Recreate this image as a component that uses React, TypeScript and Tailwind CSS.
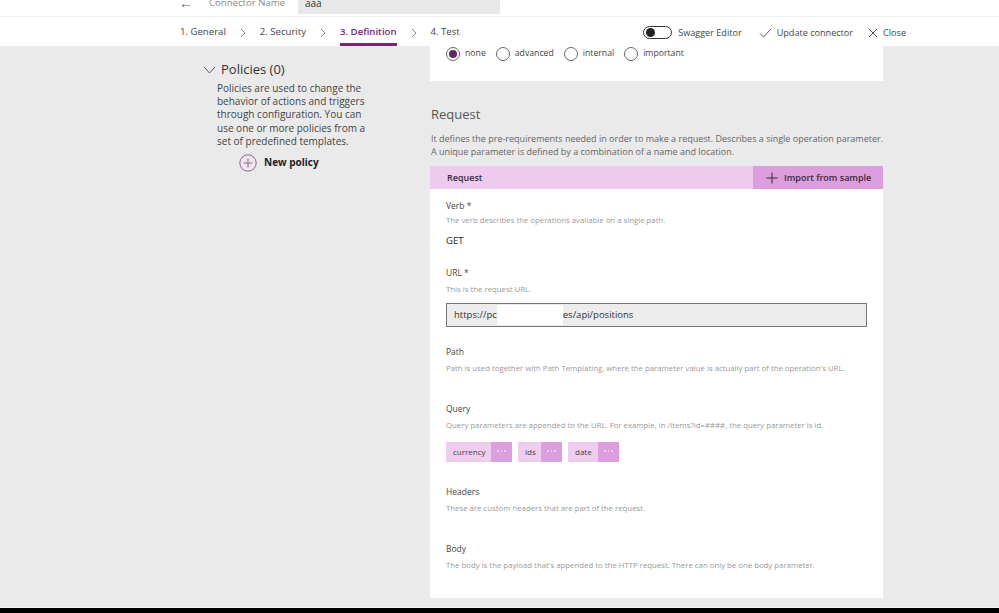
import React from 'react';

const font = { fontFamily: '"Open Sans", "Noto Sans", sans-serif' };

function Chevron() {
  return (
    <svg width="8" height="10" viewBox="0 0 8 10" className="text-[#888]">
      <path d="M2 1l4 4-4 4" fill="none" stroke="currentColor" strokeWidth="1" />
    </svg>
  );
}

function Radio({ label, checked }: { label: string; checked?: boolean }) {
  return (
    <div className="flex items-center gap-[5px]">
      <span className="w-[14px] h-[14px] rounded-full border border-[#666] flex items-center justify-center bg-white">
        {checked && <span className="w-[8px] h-[8px] rounded-full bg-[#5c2a5c]" />}
      </span>
      <span className="text-[8.7px] text-[#444]">{label}</span>
    </div>
  );
}

function Field({ label, desc, gap = 'mt-[4px]', children }: { label: string; desc: string; gap?: string; children?: React.ReactNode }) {
  return (
    <div>
      <div className="text-[8.5px] text-[#444] leading-[12px]">{label}</div>
      <div className={`${gap} text-[7.8px] text-[#9a9a9a] leading-[12px]`}>{desc}</div>
      {children}
    </div>
  );
}

function Chip({ name, w }: { name: string; w: string }) {
  return (
    <div className="flex h-[20px]">
      <div className={`${w} bg-[#efcdef] text-[8px] text-[#444] flex items-center pl-[7px]`}>{name}</div>
      <div className="w-[21px] bg-[#dc9edc] flex items-center justify-center gap-[2px] pb-[2px]">
        <span className="w-[1.5px] h-[1.5px] rounded-full bg-[#f3dcf3]" />
        <span className="w-[1.5px] h-[1.5px] rounded-full bg-[#f3dcf3]" />
        <span className="w-[1.5px] h-[1.5px] rounded-full bg-[#f3dcf3]" />
      </div>
    </div>
  );
}

export default function App() {
  return (
    <div style={font} className="w-[999px] h-[613px] overflow-hidden bg-[#eaeaea] flex flex-col">
      {/* top strip, page scrolled so it is cut */}
      <div className="h-[17px] bg-white border-b border-[#efefef] overflow-hidden shrink-0">
        <div className="flex items-center h-[24px] -mt-[9px] pl-[179px]">
          <span className="text-[14px] text-[#666] leading-none">←</span>
          <span className="ml-[16px] text-[9.6px] text-[#888]">Connector Name</span>
          <div className="ml-[13px] w-[202px] h-[22px] bg-[#e8e8e8] flex items-center pl-[7px] text-[10px] text-[#333]">
            aaa
          </div>
        </div>
      </div>

      {/* steps */}
      <div className="h-[29px] bg-white flex items-stretch shrink-0">
        <div className="flex items-stretch pl-[180px] text-[9.6px] text-[#444]">
          <div className="flex items-center pt-[2px]">1. General</div>
          <div className="flex items-center px-[13px] pt-[2px]"><Chevron /></div>
          <div className="flex items-center pt-[2px]">2. Security</div>
          <div className="flex items-center px-[13px] pt-[2px]"><Chevron /></div>
          <div className="flex items-center border-b-[3px] border-[#742774] pt-[5px] text-[#742774] font-semibold">3. Definition</div>
          <div className="flex items-center px-[13px] pt-[2px]"><Chevron /></div>
          <div className="flex items-center pt-[2px]">4. Test</div>
        </div>
        <div className="flex items-center ml-auto pr-[93px] pt-[2px] text-[9.1px] text-[#444]">
          <div className="w-[29px] h-[13px] rounded-full border border-[#333] flex items-center pl-[2px]">
            <span className="w-[9px] h-[9px] rounded-full bg-[#222]" />
          </div>
          <span className="ml-[6px]">Swagger Editor</span>
          <svg width="13" height="10" viewBox="0 0 13 10" className="ml-[17px]">
            <path d="M1 5.5l3.5 3.5L12 1" fill="none" stroke="#555" strokeWidth="1" />
          </svg>
          <span className="ml-[5px]">Update connector</span>
          <svg width="10" height="10" viewBox="0 0 10 10" className="ml-[15px]">
            <path d="M1 1l8 8M9 1l-8 8" fill="none" stroke="#555" strokeWidth="1" />
          </svg>
          <span className="ml-[5px]">Close</span>
        </div>
      </div>

      {/* main */}
      <div className="flex flex-1 min-h-0">
        <div className="w-[430px] pl-[203px] pt-[14px] shrink-0">
          <div className="flex items-center gap-[5px]">
            <svg width="13" height="8" viewBox="0 0 13 8">
              <path d="M1 1l5.5 6L12 1" fill="none" stroke="#555" strokeWidth="1" />
            </svg>
            <span className="text-[13px] text-[#333]">Policies (0)</span>
          </div>
          <p className="ml-[14px] mt-[2px] w-[150px] text-[10px] leading-[13.4px] text-[#444]">
            Policies are used to change the behavior of actions and triggers through configuration. You can use one or more policies from a set of predefined templates.
          </p>
          <div className="flex items-center ml-[36px] mt-[5px] gap-[7px]">
            <svg width="18" height="18" viewBox="0 0 18 18">
              <circle cx="9" cy="9" r="8.2" fill="none" stroke="#9b5d9b" strokeWidth="1" />
              <path d="M9 4.5v9M4.5 9h9" stroke="#9b5d9b" strokeWidth="1" />
            </svg>
            <span className="text-[10px] font-bold text-[#222]">New policy</span>
          </div>
        </div>

        <div className="w-[453px] shrink-0 flex flex-col">
          <div className="h-[35px] bg-white flex items-start pt-[1px] pl-[16px] gap-[10px]">
            <Radio label="none" checked />
            <Radio label="advanced" />
            <Radio label="internal" />
            <Radio label="important" />
          </div>

          <div className="pl-[1px] mt-[25px] text-[13px] text-[#555] leading-[16px]">Request</div>
          <div className="pl-[1px] mt-[10px] text-[9px] leading-[13px] text-[#666] whitespace-nowrap">
            <div>It defines the pre-requirements needed in order to make a request. Describes a single operation parameter.</div>
            <div>A unique parameter is defined by a combination of a name and location.</div>
          </div>

          <div className="mt-[8px] h-[23px] flex bg-[#eecbee]">
            <div className="flex-1 flex items-center pl-[17px] text-[9px] font-semibold text-[#3a2b3a]">Request</div>
            <div className="w-[130px] bg-[#dc9edc] flex items-center pl-[13px] gap-[6px] text-[9px] font-semibold text-[#3a2b3a]">
              <svg width="12" height="12" viewBox="0 0 12 12">
                <path d="M6 0.5v11M0.5 6h11" stroke="#3a2b3a" strokeWidth="1" />
              </svg>
              Import from sample
            </div>
          </div>

          <div className="h-[409px] bg-white pl-[16px] pr-[16px] pt-[11px] flex flex-col">
            <Field label="Verb *" desc="The verb describes the operations available on a single path." gap="mt-[2px]">
              <div className="mt-[8px] text-[9.5px] text-[#222] leading-[14px]">GET</div>
            </Field>
            <div className="mt-[19px]">
              <Field label="URL *" desc="This is the request URL.">
                <div className="mt-[8px] h-[24px] bg-[#ececec] border border-[#777] flex items-center pl-[7px] text-[9.5px] text-[#333]">
                  <span>https://pc</span>
                  <span className="w-[66px] h-[20px] bg-white" />
                  <span>es/api/positions</span>
                </div>
              </Field>
            </div>
            <div className="mt-[19px]">
              <Field label="Path" desc="Path is used together with Path Templating, where the parameter value is actually part of the operation's URL." />
            </div>
            <div className="mt-[29px]">
              <Field label="Query" desc="Query parameters are appended to the URL. For example, in /items?id=####, the query parameter is id.">
                <div className="mt-[11px] flex gap-[6px]">
                  <Chip name="currency" w="w-[45px]" />
                  <Chip name="ids" w="w-[23px]" />
                  <Chip name="date" w="w-[30px]" />
                </div>
              </Field>
            </div>
            <div className="mt-[24px]">
              <Field label="Headers" desc="These are custom headers that are part of the request." />
            </div>
            <div className="mt-[29px]">
              <Field label="Body" desc="The body is the payload that's appended to the HTTP request. There can only be one body parameter." />
            </div>
          </div>
        </div>
      </div>

      <div className="h-[6px] bg-black border-t border-[#f4f4f4] shrink-0" />
    </div>
  );
}
